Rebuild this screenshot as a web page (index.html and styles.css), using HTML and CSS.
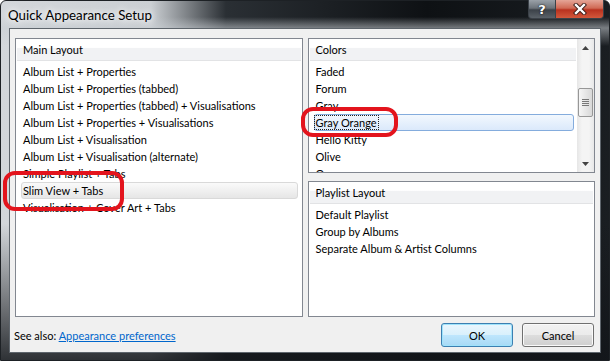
FILE: index.html
```html
<!DOCTYPE html>
<html lang="en">
<head>
  <meta charset="UTF-8">
  <title>Quick Appearance Setup</title>
  <link rel="stylesheet" href="styles.css">
</head>
<body>
  <div class="window">
    <div class="titlebar">
      <span class="caption">Quick Appearance Setup</span>
      <div class="caption-buttons">
        <div class="cap-btn help">?</div>
        <div class="cap-btn close">
          <svg width="14" height="12" viewBox="0 0 14 12">
            <path d="M3 2 L11 10 M11 2 L3 10" stroke="#3a1a16" stroke-width="4.2" stroke-linecap="square" fill="none"/>
            <path d="M3 2 L11 10 M11 2 L3 10" stroke="#fff" stroke-width="2.4" stroke-linecap="square" fill="none"/>
          </svg>
        </div>
      </div>
    </div>

    <div class="client">
      <div class="panels">
        <div class="listbox">
          <div class="list-header">Main Layout</div>
          <ul class="items">
            <li>Album List + Properties</li>
            <li>Album List + Properties (tabbed)</li>
            <li>Album List + Properties (tabbed) + Visualisations</li>
            <li>Album List + Properties + Visualisations</li>
            <li>Album List + Visualisation</li>
            <li>Album List + Visualisation (alternate)</li>
            <li>Simple Playlist + Tabs</li>
            <li class="selected-gray">Slim View + Tabs</li>
            <li>Visualisation + Cover Art + Tabs</li>
          </ul>
        </div>

        <div class="right-col">
          <div class="listbox with-scroll">
            <div class="list-body">
              <div class="list-header">Colors</div>
              <ul class="items">
                <li>Faded</li>
                <li>Forum</li>
                <li>Gray</li>
                <li class="selected-blue"><span class="focus">Gray Orange</span></li>
                <li>Hello Kitty</li>
                <li>Olive</li>
                <li>Orange</li>
              </ul>
            </div>
            <div class="scrollbar">
              <div class="arrow">
                <svg width="7" height="4" viewBox="0 0 7 4"><polygon points="0,4 7,4 3.5,0" fill="#444"/></svg>
              </div>
              <div class="track">
                <div class="thumb">
                  <svg width="7" height="7" viewBox="0 0 7 7">
                    <rect x="0" y="0" width="7" height="1" fill="#777"/>
                    <rect x="0" y="2" width="7" height="1" fill="#777"/>
                    <rect x="0" y="4" width="7" height="1" fill="#777"/>
                    <rect x="0" y="6" width="7" height="1" fill="#777"/>
                  </svg>
                </div>
              </div>
              <div class="arrow">
                <svg width="7" height="4" viewBox="0 0 7 4"><polygon points="0,0 7,0 3.5,4" fill="#444"/></svg>
              </div>
            </div>
          </div>

          <div class="listbox">
            <div class="list-header">Playlist Layout</div>
            <ul class="items">
              <li>Default Playlist</li>
              <li>Group by Albums</li>
              <li>Separate Album &amp; Artist Columns</li>
            </ul>
          </div>
        </div>
      </div>

      <div class="footer">
        <span class="see-also">See also: <a href="#">Appearance preferences</a></span>
        <div class="buttons">
          <button class="btn default">OK</button>
          <button class="btn">Cancel</button>
        </div>
      </div>
    </div>

    <!-- red annotation marks -->
    <div class="mark mark-slim"></div>
    <div class="mark mark-gray"></div>
  </div>
</body>
</html>
```

FILE: styles.css
```css
* {
  margin: 0;
  padding: 0;
  box-sizing: border-box;
}

body {
  font-family: Lato, 'Liberation Sans', sans-serif;
  font-size: 11px;
  color: #000;
  background: #fff;
}

.window {
  position: relative;
  width: 610px;
  height: 361px;
  display: flex;
  flex-direction: column;
  padding: 0 8px 7px 8px;
  border-radius: 6px 6px 0 0;
  border: 1px solid #1d2125;
  background:
    linear-gradient(to bottom, rgba(0, 0, 0, 0) 62%, rgba(18, 21, 25, 0.85) 100%),
    linear-gradient(to bottom, rgba(0, 0, 0, 0) 16px, rgba(200, 205, 210, 0.55) 27px, rgba(0, 0, 0, 0) 45px),
    linear-gradient(to right, #d3d7db 0, #cbcfd3 150px, #2a2f34 225px, #0e1114 70%, #1a1e22 100%);
}

.titlebar {
  height: 27px;
  display: flex;
  justify-content: space-between;
  margin: 0 -8px;
  padding-left: 7px;
}

.caption {
  font-size: 13.3px;
  line-height: 28px;
  color: #000;
  text-shadow: 0 0 6px #fff, 0 0 10px #fff;
}

.caption-buttons {
  display: flex;
  margin-right: 5px;
  height: 19px;
  margin-top: -1px;
}

.cap-btn {
  height: 19px;
  display: flex;
  align-items: center;
  justify-content: center;
  border: 1px solid #3b4148;
  border-top: none;
}

.help {
  width: 28px;
  border-radius: 0 0 0 4px;
  background: linear-gradient(to bottom, #9aa1a8 0, #6c737a 45%, #3c4249 55%, #5a6168 100%);
  color: #fff;
  font-weight: bold;
  font-size: 13px;
  font-family: 'DejaVu Sans', sans-serif;
  text-shadow: 0 0 2px #222, 0 0 1px #000;
}

.close {
  width: 48px;
  border-left: none;
  border-radius: 0 0 4px 0;
  background: linear-gradient(to bottom, #e5a597 0, #d06a55 45%, #b9321f 55%, #d2583c 100%);
}

.client {
  flex: 1;
  display: flex;
  flex-direction: column;
  background: #f0f0f0;
  border: 1px solid #5e656c;
  padding: 9px 5px 5px 5px;
}

.panels {
  flex: 1;
  display: grid;
  grid-template-columns: 1fr 1fr;
  gap: 5px;
  min-height: 0;
}

.right-col {
  display: grid;
  grid-template-rows: 135px 1fr;
  gap: 8px;
  min-height: 0;
}

.listbox {
  background: #fff;
  border: 1px solid #828790;
  overflow: hidden;
  min-height: 0;
}

.with-scroll {
  display: flex;
}

.list-body {
  flex: 1;
  min-width: 0;
}

.list-header {
  height: 22px;
  line-height: 22px;
  padding-left: 6px;
  margin: 0 1px;
  border-bottom: 1px solid #e2e3e5;
  background: linear-gradient(to bottom, #fff 0, #fff 40%, #f1f2f4 45%, #f1f2f4 100%);
}

.items {
  list-style: none;
  padding-top: 2px;
}

.items li {
  height: 17px;
  line-height: 16px;
  margin: 0 4px 0 5px;
  padding-left: 1px;
  border: 1px solid transparent;
  white-space: nowrap;
}

.selected-gray {
  border-color: #d9d9d9 !important;
  border-radius: 3px;
  background: linear-gradient(to bottom, #fafafa, #e6e6e6);
}

.selected-blue {
  border-color: #84acdd !important;
  border-radius: 3px;
  background: linear-gradient(to bottom, #f2f8fe, #dbe9fb);
  margin-right: 3px !important;
  padding-left: 0 !important;
}

.focus {
  outline: 1px dotted #222;
  outline-offset: 0;
  padding: 0 1px;
}

.scrollbar {
  width: 17px;
  display: flex;
  flex-direction: column;
  background: linear-gradient(to right, #e6e6e6, #f4f4f4 30%, #f4f4f4 70%, #e8e8e8);
}

.arrow {
  height: 17px;
  display: flex;
  align-items: center;
  justify-content: center;
}

.track {
  flex: 1;
  padding-top: 32px;
}

.thumb {
  width: 15px;
  height: 29px;
  margin-left: 1px;
  border: 1px solid #979797;
  border-radius: 2px;
  background: linear-gradient(to right, #f6f6f6, #e7e7e7 50%, #d8d8d8);
  display: flex;
  align-items: center;
  justify-content: center;
}

.footer {
  height: 24px;
  margin-top: 6px;
  display: flex;
  align-items: center;
  justify-content: space-between;
}

.see-also {
  margin-left: -1px;
}

.see-also a {
  color: #0066cc;
}

.buttons {
  display: flex;
  gap: 9px;
  margin-right: 1px;
}

.btn {
  width: 72px;
  height: 24px;
  font-family: inherit;
  font-size: inherit;
  color: #000;
  border: 1px solid #707070;
  border-radius: 3px;
  background: linear-gradient(to bottom, #f2f2f2 0, #ebebeb 50%, #dddddd 51%, #cfcfcf 100%);
  box-shadow: inset 0 0 0 1px #fafafa;
}

.btn.default {
  border-color: #3c7fb1;
  background: linear-gradient(to bottom, #eaf6fd 0, #d9f0fc 50%, #bee6fd 51%, #a7d9f5 100%);
  box-shadow: inset 0 0 0 1px #9fe3fb;
}

.mark {
  position: absolute;
  border: 4px solid #e3141d;
  border-radius: 12px;
}

.mark-slim {
  left: 2px;
  top: 170px;
  width: 121px;
  height: 40px;
}

.mark-gray {
  left: 300px;
  top: 106px;
  width: 97px;
  height: 30px;
}
```
